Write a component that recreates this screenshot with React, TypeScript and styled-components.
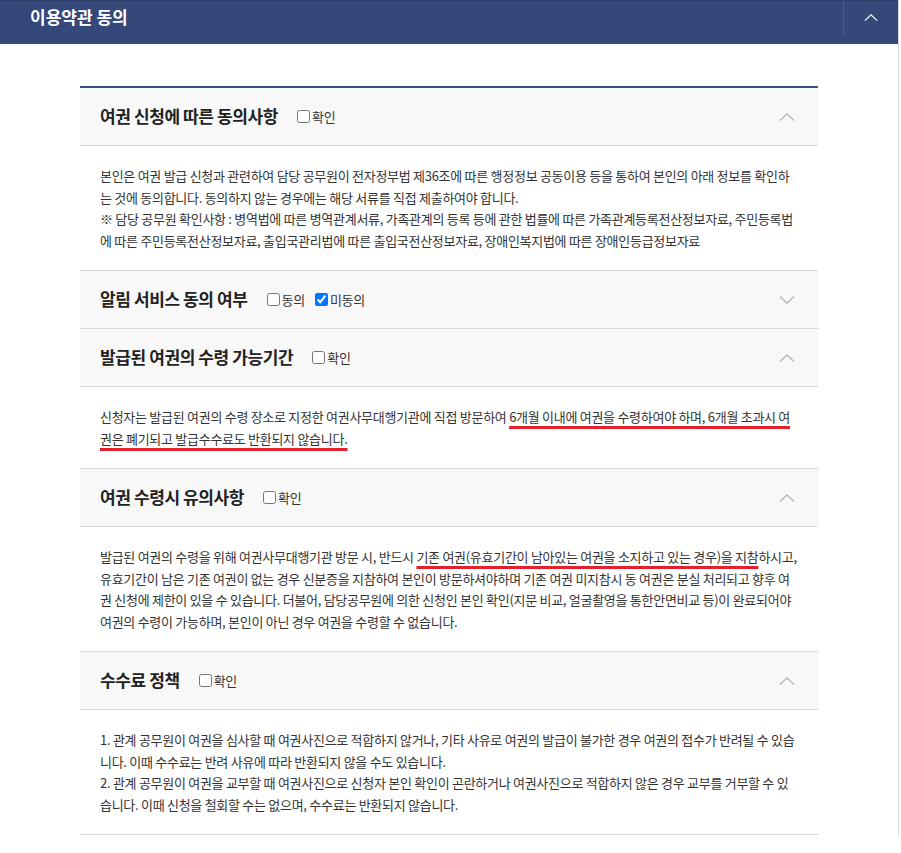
import React from 'react';
import styled, { createGlobalStyle } from 'styled-components';

const GlobalStyle = createGlobalStyle`
  html, body {
    margin: 0;
    padding: 0;
    background: #fff;
  }
  body {
    font-family: 'Noto Sans CJK KR', 'Noto Sans', sans-serif;
    color: #333;
  }
`;

const Page = styled.div`
  width: 898px;
  border-right: 1px solid #d9d9d9;
  background: #fff;
`;

const TopBar = styled.div`
  display: flex;
  align-items: center;
  height: 44px;
  background-color: #34497a;
  border-top: 1px solid #2c3f6b;
  box-sizing: border-box;
`;

const TopTitle = styled.h2`
  flex: 1;
  margin: 0 0 12px 30px;
  font-size: 17px;
  font-weight: 700;
  letter-spacing: 0;
  color: #fff;
`;

const TopToggle = styled.button`
  align-self: stretch;
  width: 55px;
  display: flex;
  justify-content: center;
  align-items: flex-start;
  padding: 12px 0 0;
  margin-bottom: 8px;
  background: transparent;
  border: 0;
  border-left: 1px solid #4c6090;
  cursor: pointer;
`;

const Content = styled.div`
  padding: 42px 80px 0;
`;

const List = styled.div`
  border-top: 2px solid #3a4f7e;
`;

const Section = styled.section``;

const SectionHead = styled.div`
  display: flex;
  align-items: center;
  height: 57px;
  padding: 0 22px 0 20px;
  background-color: #f8f8f8;
  border-bottom: 1px solid #d8d8d8;
`;

const SectionTitle = styled.h3`
  margin: 0 19px 2px 0;
  font-size: 17px;
  font-weight: 700;
  letter-spacing: -0.4px;
  color: #222;
`;

const Options = styled.div`
  display: flex;
  align-items: center;
  gap: 10px;
  flex: 1;
`;

const Option = styled.label`
  display: flex;
  align-items: center;
  font-size: 13px;
  letter-spacing: -0.3px;
  color: #333;

  input {
    width: 13px;
    height: 13px;
    margin: 0 2px 0 0;
  }
`;

const Chevron = styled.span`
  display: flex;
  width: 18px;
  justify-content: center;
`;

const SectionBody = styled.div`
  padding: 19px 20px;
  border-bottom: 1px solid #d8d8d8;
  font-size: 13px;
  line-height: 21.5px;
  letter-spacing: -0.28px;
  color: #333;
  word-break: break-all;

  p {
    margin: 0;
  }
`;

const Mark = styled.span`
  text-decoration: underline;
  text-decoration-color: #e3202b;
  text-decoration-thickness: 3px;
  text-underline-offset: 4px;
`;

const ChevronIcon = ({ up, color, size = 16 }: { up: boolean; color: string; size?: number }) => (
  <svg width={size} height={size / 2 + 2} viewBox="0 0 16 9" fill="none">
    <path
      d={up ? 'M1 8 L8 1.5 L15 8' : 'M1 1 L8 7.5 L15 1'}
      stroke={color}
      strokeWidth="1.3"
    />
  </svg>
);

interface ICheck {
  label: string;
  checked?: boolean;
}

interface ISectionProps {
  title: string;
  checks: ICheck[];
  open: boolean;
  children?: React.ReactNode;
}

const AgreeSection = ({ title, checks, open, children }: ISectionProps) => (
  <Section>
    <SectionHead>
      <SectionTitle>{title}</SectionTitle>
      <Options>
        {checks.map((c) => (
          <Option key={c.label}>
            <input type="checkbox" defaultChecked={c.checked} />
            {c.label}
          </Option>
        ))}
      </Options>
      <Chevron>
        <ChevronIcon up={open} color="#b5b5b5" />
      </Chevron>
    </SectionHead>
    {open && <SectionBody>{children}</SectionBody>}
  </Section>
);

export default function App() {
  return (
    <Page>
      <GlobalStyle />
      <TopBar>
        <TopTitle>이용약관 동의</TopTitle>
        <TopToggle aria-label="접기">
          <ChevronIcon up color="#fff" size={14} />
        </TopToggle>
      </TopBar>
      <Content>
        <List>
          <AgreeSection title="여권 신청에 따른 동의사항" checks={[{ label: '확인' }]} open>
            <p>
              본인은 여권 발급 신청과 관련하여 담당 공무원이 전자정부법 제36조에 따른 행정정보 공동이용 등을 통하여 본인의 아래 정보를 확인하는 것에 동의합니다. 동의하지 않는 경우에는 해당 서류를 직접 제출하여야 합니다.
            </p>
            <p>
              ※ 담당 공무원 확인사항 : 병역법에 따른 병역관계서류, 가족관계의 등록 등에 관한 법률에 따른 가족관계등록전산정보자료, 주민등록법에 따른 주민등록전산정보자료, 출입국관리법에 따른 출입국전산정보자료, 장애인복지법에 따른 장애인등급정보자료
            </p>
          </AgreeSection>
          <AgreeSection
            title="알림 서비스 동의 여부"
            checks={[{ label: '동의' }, { label: '미동의', checked: true }]}
            open={false}
          />
          <AgreeSection title="발급된 여권의 수령 가능기간" checks={[{ label: '확인' }]} open>
            <p>
              신청자는 발급된 여권의 수령 장소로 지정한 여권사무대행기관에 직접 방문하여{' '}
              <Mark>6개월 이내에 여권을 수령하여야 하며, 6개월 초과시 여권은 폐기되고 발급수수료도 반환되지 않습니다.</Mark>
            </p>
          </AgreeSection>
          <AgreeSection title="여권 수령시 유의사항" checks={[{ label: '확인' }]} open>
            <p>
              발급된 여권의 수령을 위해 여권사무대행기관 방문 시, 반드시{' '}
              <Mark>기존 여권(유효기간이 남아있는 여권을 소지하고 있는 경우)을 지참</Mark>하시고, 유효기간이 남은 기존 여권이 없는 경우 신분증을 지참하여 본인이 방문하셔야하며 기존 여권 미지참시 동 여권은 분실 처리되고 향후 여권 신청에 제한이 있을 수 있습니다. 더불어, 담당공무원에 의한 신청인 본인 확인(지문 비교, 얼굴촬영을 통한안면비교 등)이 완료되어야 여권의 수령이 가능하며, 본인이 아닌 경우 여권을 수령할 수 없습니다.
            </p>
          </AgreeSection>
          <AgreeSection title="수수료 정책" checks={[{ label: '확인' }]} open>
            <p>
              1. 관계 공무원이 여권을 심사할 때 여권사진으로 적합하지 않거나, 기타 사유로 여권의 발급이 불가한 경우 여권의 접수가 반려될 수 있습니다. 이때 수수료는 반려 사유에 따라 반환되지 않을 수도 있습니다.
            </p>
            <p>
              2. 관계 공무원이 여권을 교부할 때 여권사진으로 신청자 본인 확인이 곤란하거나 여권사진으로 적합하지 않은 경우 교부를 거부할 수 있습니다. 이때 신청을 철회할 수는 없으며, 수수료는 반환되지 않습니다.
            </p>
          </AgreeSection>
        </List>
      </Content>
    </Page>
  );
}
